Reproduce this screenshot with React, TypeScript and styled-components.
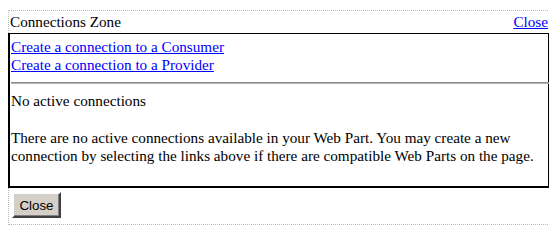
import React from "react";
import styled, { createGlobalStyle } from "styled-components";

const GlobalStyle = createGlobalStyle`
  body {
    margin: 8px;
    background: #ffffff;
    font-family: "Liberation Serif", "Times New Roman", serif;
    font-size: 15.2px;
    color: #000000;
  }
`;

const Zone = styled.div`
  margin-top: 2px;
  width: 540px;
  border: 1px dotted #b8b8b8;
  padding-bottom: 6px;
`;

const ZoneHeader = styled.div`
  display: flex;
  justify-content: space-between;
  align-items: flex-start;
  padding: 2px 1px 2px 1px;
  height: 18px;
  line-height: 18px;
`;

const Title = styled.span`
  color: #000000;
`;

const Link = styled.a`
  color: #0000ff;
  text-decoration: underline;
  cursor: pointer;
`;

const Panel = styled.div`
  margin-left: -1px;
  width: 535px;
  border: 2px solid #000000;
  border-top-width: 1px;
  padding: 4px 2px 21px 1px;
  line-height: 18px;
`;

const LinkList = styled.div`
  display: flex;
  flex-direction: column;
  align-items: flex-start;
`;

const Divider = styled.hr`
  margin: 8px -3px 8px 0;
  border: none;
  border-top: 1px solid #8c8c8c;
  border-bottom: 1px solid #b4b4b4;
  height: 0;
`;

const Status = styled.div`
  margin-bottom: 19px;
`;

const Message = styled.div``;

const CloseButton = styled.button`
  margin: 4px 0 0 3px;
  width: 49px;
  height: 26px;
  padding: 0;
  background: #d4d0c8;
  border: 2px solid;
  border-color: #ffffff #404040 #404040 #ffffff;
  box-shadow: inset -1px -1px 0 #808080;
  font-family: "Liberation Sans", Arial, sans-serif;
  font-size: 13.33px;
  color: #000000;
  cursor: pointer;
`;

const App: React.FC = () => {
  return (
    <>
      <GlobalStyle />
      <Zone>
        <ZoneHeader>
          <Title>Connections Zone</Title>
          <Link>Close</Link>
        </ZoneHeader>
        <Panel>
          <LinkList>
            <Link>Create a connection to a Consumer</Link>
            <Link>Create a connection to a Provider</Link>
          </LinkList>
          <Divider />
          <Status>No active connections</Status>
          <Message>
            There are no active connections available in your Web Part. You may
            create a new connection by selecting the links above if there are
            compatible Web Parts on the page.
          </Message>
        </Panel>
        <CloseButton>Close</CloseButton>
      </Zone>
    </>
  );
};

export default App;
